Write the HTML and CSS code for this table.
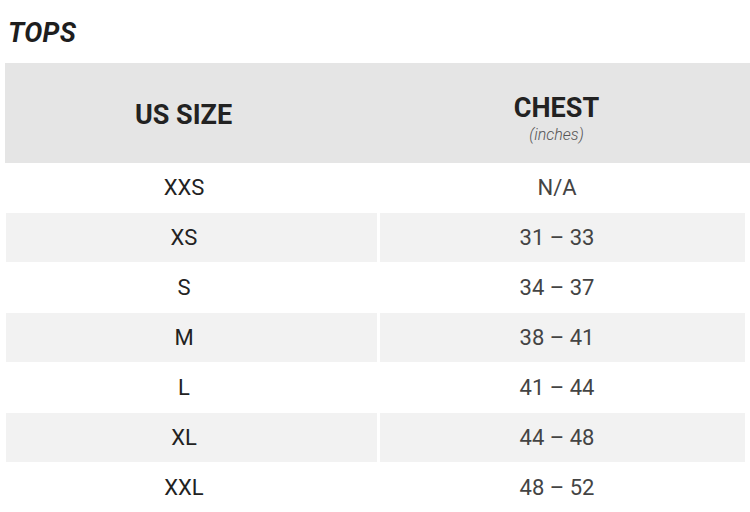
FILE: index.html
```html
<!DOCTYPE html>
<html>
<head>
<meta charset="utf-8">
<link rel="stylesheet" href="styles.css">
</head>
<body>
<h1 class="title">TOPS</h1>
<div class="table">
  <div class="head">
    <div class="hcell hleft">US SIZE</div>
    <div class="hcell hright"><div class="hmain">CHEST</div><div class="hsub">(inches)</div></div>
  </div>
  <div class="row"><div class="cell size">XXS</div><div class="cell val">N/A</div></div>
  <div class="row alt"><div class="cell size">XS</div><div class="cell val">31 – 33</div></div>
  <div class="row"><div class="cell size">S</div><div class="cell val">34 – 37</div></div>
  <div class="row alt"><div class="cell size">M</div><div class="cell val">38 – 41</div></div>
  <div class="row"><div class="cell size">L</div><div class="cell val">41 – 44</div></div>
  <div class="row alt"><div class="cell size">XL</div><div class="cell val">44 – 48</div></div>
  <div class="row"><div class="cell size">XXL</div><div class="cell val">48 – 52</div></div>
</div>
</body>
</html>
```
FILE: styles.css
```css
html, body {
  margin: 0;
  padding: 0;
  background: #ffffff;
  font-family: Roboto, "Liberation Sans", sans-serif;
  overflow: hidden;
}
.title {
  margin: 0;
  padding: 19px 0 0 8px;
  height: 45px;
  box-sizing: border-box;
  font-size: 27px;
  line-height: 28px;
  font-weight: 700;
  font-style: italic;
  color: #1e1e1e;
  letter-spacing: 0.3px;
}
.table {
  margin-left: 5px;
  width: 745px;
  margin-top: 18px;
}
.head {
  display: grid;
  grid-template-columns: 372px 373px;
  height: 100px;
  background: #e5e5e5;
}
.hcell {
  display: flex;
  flex-direction: column;
  align-items: center;
  justify-content: center;
  color: #222222;
  font-weight: 700;
  font-size: 27px;
}
.hleft { padding-right: 15px; padding-top: 4px; }
.hright { padding-right: 14px; padding-top: 12px; }
.hmain { line-height: 28px; }
.hsub {
  font-size: 16px;
  font-weight: 300;
  font-style: italic;
  color: #555555;
  line-height: 18px;
  margin-top: 4px;
}
.row {
  display: grid;
  grid-template-columns: 372px 370px;
  column-gap: 3px;
  height: 50px;
}
.cell {
  display: flex;
  align-items: center;
  justify-content: center;
  height: 49px;
  font-size: 22px;
}
.size {
  margin-left: 1px;
  padding-right: 15px;
  color: #222222;
  font-weight: 400;
}
.val {
  margin-right: 5px;
  padding-right: 11px;
  color: #444444;
  font-weight: 400;
}
.alt .cell { background: #f2f2f2; }
```
